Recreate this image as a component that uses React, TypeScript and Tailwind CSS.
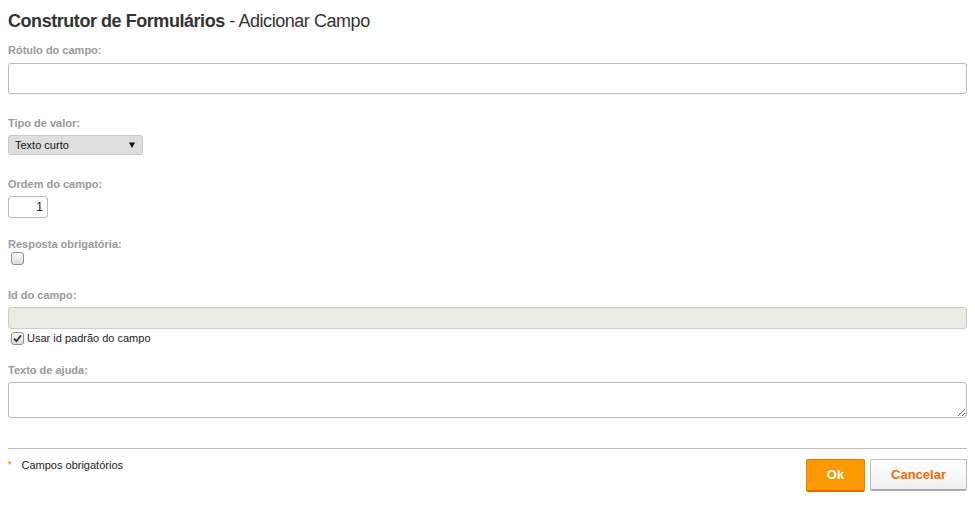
import { useState } from "react";

function Box({ checked }: { checked: boolean }) {
  return (
    <span className="inline-flex h-[13px] w-[13px] items-center justify-center rounded-[3px] border border-[#8f8f8f] bg-gradient-to-b from-[#fbfbfb] to-[#dcdcdc]">
      {checked && (
        <svg width="9" height="9" viewBox="0 0 9 9">
          <path d="M1 4.6 L3.4 7.2 L8 1.4" fill="none" stroke="#333" strokeWidth="1.8" />
        </svg>
      )}
    </span>
  );
}

function Label({ children, gap = "mb-[5px]" }: { children: React.ReactNode; gap?: string }) {
  return <div className={`${gap} text-[11px] font-bold leading-[14px] text-[#999]`}>{children}</div>;
}

export default function App() {
  const [required, setRequired] = useState(false);
  const [useDefault, setUseDefault] = useState(true);

  return (
    <div className="min-h-screen bg-white px-2 font-['Liberation_Sans',Arial,sans-serif] text-[#333]">
      <h1 className="pt-[10px] text-[18px] leading-[22px] tracking-[-0.45px] text-[#333]">
        <span className="font-bold">Construtor de Formulários</span> - Adicionar Campo
      </h1>

      {/* Rótulo */}
      <div className="mt-[11px]">
        <Label gap="mb-[6px]">Rótulo do campo:</Label>
        <input className="block h-[31px] w-full rounded-[3px] border border-[#bbb] bg-white px-2 text-[12px] outline-none" />
      </div>

      {/* Tipo de valor */}
      <div className="mt-[22px]">
        <Label>Tipo de valor:</Label>
        <div className="flex h-[20px] w-[135px] items-center justify-between rounded-[3px] border border-[#c8c8c8] bg-[#dedede] pl-[6px] pr-[7px] text-[11px] text-[#111]">
          <span>Texto curto</span>
          <svg width="6" height="6" viewBox="0 0 6 6">
            <path d="M0 0.5 H6 L3 6 Z" fill="#111" />
          </svg>
        </div>
      </div>

      {/* Ordem */}
      <div className="mt-[22px]">
        <Label>Ordem do campo:</Label>
        <div className="flex h-[22px] w-[40px] items-center justify-end rounded-[3px] border border-[#bbb] bg-white pr-[4px] text-[12px] text-[#111]">
          1
        </div>
      </div>

      {/* Obrigatória */}
      <div className="mt-[19px]">
        <div className="text-[11px] font-bold leading-[14px] text-[#999]">Resposta obrigatória:</div>
        <button className="ml-[3px] mt-[1px] flex" onClick={() => setRequired(!required)}>
          <Box checked={required} />
        </button>
      </div>

      {/* Id */}
      <div className="mt-[23px]">
        <Label>Id do campo:</Label>
        <div className="h-[22px] w-full rounded-[3px] border border-[#ccc] bg-[#ebebe4]" />
        <label className="mt-[2px] flex items-center gap-[3px] pl-[3px] text-[11px] leading-[14px] text-[#222]" onClick={() => setUseDefault(!useDefault)}>
          <Box checked={useDefault} />
          <span>Usar id padrão do campo</span>
        </label>
      </div>

      {/* Ajuda */}
      <div className="mt-[18px]">
        <Label>Texto de ajuda:</Label>
        <textarea className="block h-[36px] w-full rounded-[3px] border border-[#bbb] bg-white px-2 text-[12px] outline-none" />
      </div>

      <div className="mt-[30px] border-t border-[#bbb]" />

      <div className="mt-[10px] flex items-start justify-between">
        <div className="flex items-center gap-[10px] text-[11px] leading-[12px] text-[#222]">
          <span className="-mt-[3px] text-[9px] font-bold text-[#f5a300]">*</span>
          <span>Campos obrigatórios</span>
        </div>
        <div className="flex gap-[5px]">
          <button className="h-[33px] w-[59px] rounded-[2px] border border-[#f77f00] border-b-[2px] border-b-[#e56a00] bg-[#fb9a00] text-[13px] font-bold text-white">
            Ok
          </button>
          <button className="h-[32px] w-[97px] rounded-[2px] border border-[#bbb] border-b-[2px] border-b-[#aaa] bg-gradient-to-b from-white to-[#f0f0f0] text-[13px] font-bold text-[#f26a00]">
            Cancelar
          </button>
        </div>
      </div>
    </div>
  );
}
